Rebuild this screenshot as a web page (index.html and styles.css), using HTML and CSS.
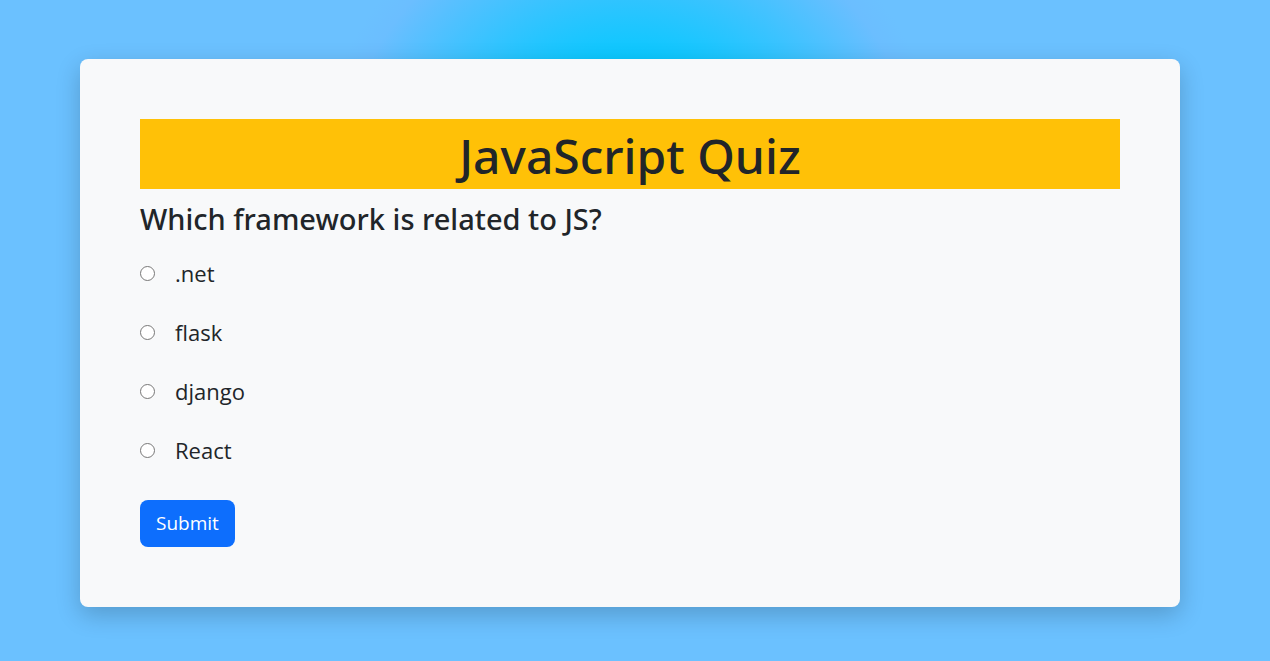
FILE: index.html
```html
<!DOCTYPE html>
<html lang="en">
<head>
<meta charset="utf-8">
<meta name="viewport" content="width=device-width, initial-scale=1">
<title>JavaScript Quiz</title>
<link rel="stylesheet" href="styles.css">
</head>
<body>
<main class="quiz">
  <h1 class="quiz-title">JavaScript Quiz</h1>
  <form>
    <fieldset class="question">
      <legend class="question-text">Which framework is related to JS?</legend>
      <div class="option"><input type="radio" name="answer" id="a"><label for="a">.net</label></div>
      <div class="option"><input type="radio" name="answer" id="b"><label for="b">flask</label></div>
      <div class="option"><input type="radio" name="answer" id="c"><label for="c">django</label></div>
      <div class="option"><input type="radio" name="answer" id="d"><label for="d">React</label></div>
    </fieldset>
    <button type="button" class="submit">Submit</button>
  </form>
</main>
</body>
</html>
```

FILE: styles.css
```css
* {
  box-sizing: border-box;
}

body {
  margin: 0;
  min-height: 100vh;
  padding: 59px 90px 54px 80px;
  font-family: "Segoe UI", "Noto Sans", "Open Sans", sans-serif;
  color: #212529;
  background: radial-gradient(circle at calc(50% - 5px) 200px, #00c9ff 125px, #6bbeff 295px, #6bc1ff 320px);
}

.quiz {
  padding: 60px;
  background: #f8f9fa;
  border-radius: 8px;
  box-shadow: 0 8px 24px rgba(0, 0, 0, 0.2);
}

.quiz-title {
  margin: 0 0 8px;
  padding-top: 4px;
  background: #ffc107;
  font-size: 48px;
  font-weight: 500;
  line-height: 66px;
  text-align: center;
}

.question {
  margin: 0;
  padding: 0;
  border: 0;
}

.question-text {
  padding: 0;
  margin-bottom: 15px;
  font-size: 29px;
  font-weight: 500;
  line-height: 44px;
}

.option {
  display: flex;
  align-items: center;
  gap: 20px;
  margin-bottom: 25px;
  font-family: "Segoe UI", "Open Sans", "Noto Sans", sans-serif;
  font-size: 22px;
  line-height: 34px;
}

.option input {
  width: 15px;
  height: 15px;
  margin: 0;
}

.submit {
  margin-top: 8px;
  padding: 8px 16px;
  border: 0;
  border-radius: 8px;
  background: #0d6efd;
  color: #fff;
  font-family: "Segoe UI", "Open Sans", "Noto Sans", sans-serif;
  font-size: 19px;
  line-height: 31px;
}
```
